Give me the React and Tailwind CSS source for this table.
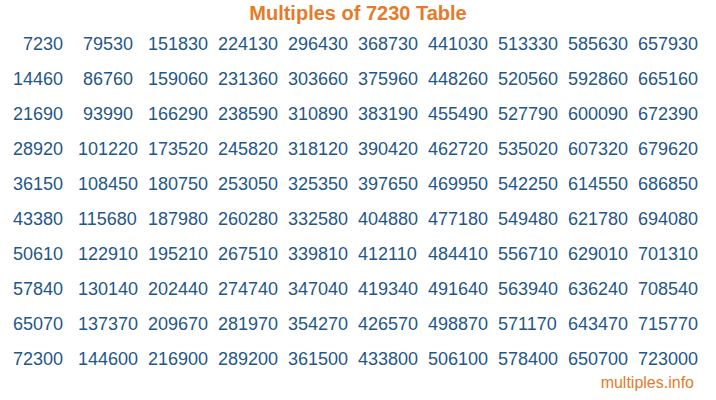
import React from "react";

export default function App() {
  const rows = Array.from({ length: 10 }, (_, r) => r + 1);
  const cols = Array.from({ length: 10 }, (_, c) => c);
  const cells = [];
  rows.forEach((r) => {
    cols.forEach((c) => {
      cells.push(7230 * (c * 10 + r));
    });
  });
  return (
    <div
      className="w-[716px] h-[400px] bg-white overflow-hidden flex flex-col"
      style={{ fontFamily: '"Liberation Sans", Arial, sans-serif' }}
    >
      <div className="h-[27px] leading-[27px] text-center text-[20px] font-bold text-[#e67a28]">
        Multiples of 7230 Table
      </div>
      <div className="ml-[8px] grid grid-cols-[repeat(10,70px)] auto-rows-[35px]">
        {cells.map((n, i) => (
          <div
            key={i}
            className="pr-[15px] text-right text-[18px] leading-[35px] text-[#1f5788]"
          >
            {n}
          </div>
        ))}
      </div>
      <div className="-mt-[2px] pr-[22px] text-right text-[16px] leading-[16px] text-[#e67a28]">
        multiples.info
      </div>
    </div>
  );
}
